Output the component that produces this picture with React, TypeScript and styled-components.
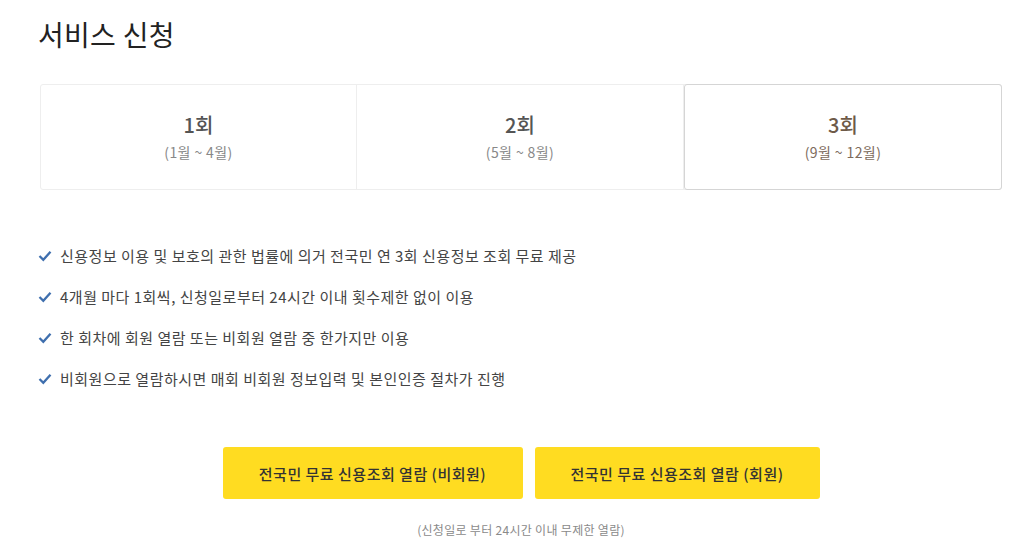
import styled, { createGlobalStyle } from "styled-components";

const GlobalStyle = createGlobalStyle`
  body {
    margin: 0;
    background: #fff;
    font-family: "Noto Sans CJK KR", "Noto Sans", sans-serif;
    color: #333;
  }
`;

const Page = styled.div`
  width: 962px;
  padding: 14px 0 0 40px;
`;

const Title = styled.h2`
  margin: 0 0 0 -2px;
  font-size: 28px;
  font-weight: 400;
  color: #222;
  line-height: 40px;
  letter-spacing: 0.3px;
`;

const Rounds = styled.div`
  display: grid;
  grid-template-columns: 316px 327px 1fr;
  margin-top: 30px;
  height: 106px;
  border: 1px solid #eeeeee;
  border-radius: 3px;
  box-sizing: border-box;
`;

const Round = styled.div<{ $active?: boolean; $last?: boolean }>`
  display: flex;
  flex-direction: column;
  align-items: center;
  justify-content: center;
  border-right: ${(p) => (p.$last ? "none" : "1px solid #eeeeee")};
  ${(p) =>
    p.$active &&
    `
    margin: -1px -1px -1px 0;
    border: 1px solid #d5d5d5;
    border-radius: 3px;
  `}
`;

const RoundName = styled.div<{ $active?: boolean }>`
  margin-top: -2px;
  font-size: 20px;
  font-weight: 500;
  line-height: 26px;
  color: ${(p) => (p.$active ? "#6e5a48" : "#555")};
`;

const RoundMonths = styled.div<{ $active?: boolean }>`
  margin-top: 5px;
  font-size: 14px;
  line-height: 18px;
  letter-spacing: 0.4px;
  color: ${(p) => (p.$active ? "#7d6b5c" : "#888")};
`;

const Notes = styled.ul`
  list-style: none;
  margin: 55px 0 0;
  padding: 0;
  display: flex;
  flex-direction: column;
  gap: 19px;
`;

const Note = styled.li`
  display: flex;
  align-items: center;
  gap: 8px;
  font-size: 15px;
  line-height: 22px;
  letter-spacing: 0.5px;
  color: #444;
`;

const Check = styled.svg`
  flex: none;
  width: 14px;
  height: 12px;
  margin-left: -2px;
`;

const Actions = styled.div`
  display: flex;
  justify-content: center;
  gap: 12px;
  margin-top: 57px;
`;

const ActionButton = styled.button<{ $width: number }>`
  width: ${(p) => p.$width}px;
  height: 52px;
  border: none;
  border-radius: 3px;
  background: #ffdc21;
  font-family: inherit;
  font-size: 15px;
  font-weight: 500;
  letter-spacing: 0.5px;
  color: #333;
  cursor: pointer;
`;

const Caption = styled.p`
  margin: 22px 0 0;
  text-align: center;
  font-size: 12px;
  color: #8a8a8a;
  letter-spacing: 0.3px;
`;

const rounds = [
  { name: "1회", months: "(1월 ~ 4월)" },
  { name: "2회", months: "(5월 ~ 8월)" },
  { name: "3회", months: "(9월 ~ 12월)", active: true },
];

const notes = [
  "신용정보 이용 및 보호의 관한 법률에 의거 전국민 연 3회 신용정보 조회 무료 제공",
  "4개월 마다 1회씩, 신청일로부터 24시간 이내 횟수제한 없이 이용",
  "한 회차에 회원 열람 또는 비회원 열람 중 한가지만 이용",
  "비회원으로 열람하시면 매회 비회원 정보입력 및 본인인증 절차가 진행",
];

export default function App() {
  return (
    <>
      <GlobalStyle />
      <Page>
        <Title>서비스 신청</Title>
        <Rounds>
          {rounds.map((r, i) => (
            <Round key={r.name} $active={r.active} $last={i === rounds.length - 1}>
              <RoundName $active={r.active}>{r.name}</RoundName>
              <RoundMonths $active={r.active}>{r.months}</RoundMonths>
            </Round>
          ))}
        </Rounds>
        <Notes>
          {notes.map((n) => (
            <Note key={n}>
              <Check viewBox="0 0 14 12">
                <path d="M1.5 6 L5.3 9.8 L12.5 1.8" fill="none" stroke="#3f6fae" strokeWidth="2.3" />
              </Check>
              {n}
            </Note>
          ))}
        </Notes>
        <Actions>
          <ActionButton $width={300}>전국민 무료 신용조회 열람 (비회원)</ActionButton>
          <ActionButton $width={285}>전국민 무료 신용조회 열람 (회원)</ActionButton>
        </Actions>
        <Caption>(신청일로 부터 24시간 이내 무제한 열람)</Caption>
      </Page>
    </>
  );
}
